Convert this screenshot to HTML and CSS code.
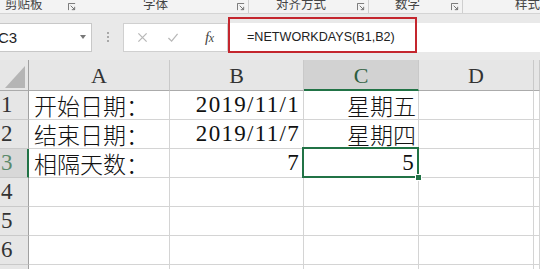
FILE: index.html
```html
<!DOCTYPE html>
<html lang="zh">
<head>
<meta charset="utf-8">
<title>NETWORKDAYS</title>
<link rel="stylesheet" href="styles.css">
</head>
<body>
<div class="ribbon">
  <div class="grp g1"><span class="lbl">剪贴板</span><svg class="launch" viewBox="0 0 9 9"><path d="M0.5 8V0.5H8" /><path d="M3 3L7.5 7.5M4.3 7.5H7.5V4.3" /></svg></div>
  <div class="grp g2"><span class="lbl">字体</span><svg class="launch" viewBox="0 0 9 9"><path d="M0.5 8V0.5H8" /><path d="M3 3L7.5 7.5M4.3 7.5H7.5V4.3" /></svg></div>
  <div class="grp g3"><span class="lbl">对齐方式</span><svg class="launch" viewBox="0 0 9 9"><path d="M0.5 8V0.5H8" /><path d="M3 3L7.5 7.5M4.3 7.5H7.5V4.3" /></svg></div>
  <div class="grp g4"><span class="lbl">数字</span><svg class="launch" viewBox="0 0 9 9"><path d="M0.5 8V0.5H8" /><path d="M3 3L7.5 7.5M4.3 7.5H7.5V4.3" /></svg></div>
  <div class="grp g5"><span class="lbl">样式</span></div>
</div>

<div class="fbar">
  <div class="namebox"><span class="nbtext">C3</span><span class="drop"></span></div>
  <div class="dots"><i></i><i></i><i></i></div>
  <div class="fxbox">
    <svg class="ico cancel" viewBox="0 0 12 12"><path d="M1.5 1.5L10.5 10.5M10.5 1.5L1.5 10.5" /></svg>
    <svg class="ico enter" viewBox="0 0 12 12"><path d="M1 6.5L4.5 10L11 2" /></svg>
    <span class="fx"><i>f</i><i class="x">x</i></span>
  </div>
  <div class="input"><span class="formula">=NETWORKDAYS(B1,B2)</span></div>
  <div class="mark"></div>
</div>

<div class="sheet">
  <div class="corner"><span class="tri"></span></div>
  <div class="ch">A</div>
  <div class="ch">B</div>
  <div class="ch sel">C</div>
  <div class="ch">D</div>
  <div class="ch"></div>

  <div class="rh">1</div>
  <div class="c">开始日期：</div>
  <div class="c num">2019/11/1</div>
  <div class="c r">星期五</div>
  <div class="c"></div>
  <div class="c"></div>

  <div class="rh">2</div>
  <div class="c">结束日期：</div>
  <div class="c num">2019/11/7</div>
  <div class="c r">星期四</div>
  <div class="c"></div>
  <div class="c"></div>

  <div class="rh rsel">3</div>
  <div class="c">相隔天数：</div>
  <div class="c num">7</div>
  <div class="c num active">5</div>
  <div class="c"></div>
  <div class="c"></div>

  <div class="rh">4</div>
  <div class="c"></div><div class="c"></div><div class="c"></div><div class="c"></div><div class="c"></div>
  <div class="rh">5</div>
  <div class="c"></div><div class="c"></div><div class="c"></div><div class="c"></div><div class="c"></div>
  <div class="rh">6</div>
  <div class="c"></div><div class="c"></div><div class="c"></div><div class="c"></div><div class="c"></div>
  <div class="rh last"></div>
  <div class="c last"></div><div class="c last"></div><div class="c last"></div><div class="c last"></div><div class="c last"></div>
</div>
</body>
</html>
```

FILE: styles.css
```css
* { box-sizing: border-box; }
html, body { margin: 0; padding: 0; }
body {
  width: 540px;
  height: 269px;
  overflow: hidden;
  background: #fff;
  font-family: "Noto Sans CJK SC", sans-serif;
}

/* ribbon strip */
.ribbon {
  display: flex;
  height: 14px;
  background: #f3f3f3;
  border-bottom: 1px solid #d4d4d4;
  overflow: hidden;
}
.grp {
  display: flex;
  align-items: flex-start;
  height: 13px;
}
.lbl {
  font-size: 12.5px;
  line-height: 13px;
  color: #444;
  margin-top: -3px;
  white-space: nowrap;
}
.launch {
  margin-left: auto;
  margin-top: 3px;
  width: 8px;
  height: 8px;
  fill: none;
  stroke: #666;
  stroke-width: 1;
}
.g1 { width: 80px; padding-left: 5px; padding-right: 4px; }
.g2 { width: 169px; padding-left: 63px; padding-right: 3px; border-right: 1px solid #cfcfcf; }
.g3 { width: 120px; padding-left: 27px; padding-right: 3px; border-right: 1px solid #cfcfcf; }
.g4 { width: 94px; padding-left: 26px; padding-right: 3px; border-right: 1px solid #cfcfcf; }
.g5 { flex: 1; padding-left: 52px; }

/* formula bar */
.fbar {
  position: relative;
  display: flex;
  align-items: center;
  height: 46px;
  background: #e9e9e9;
}
.namebox {
  display: flex;
  align-items: center;
  margin-left: -8px;
  width: 100px;
  height: 29px;
  background: #fff;
  border: 1px solid #c8c8c8;
  padding-left: 5px;
}
.nbtext {
  font-family: "Liberation Sans", sans-serif;
  font-size: 15px;
  color: #222;
}
.drop {
  margin-left: auto;
  margin-right: 5px;
  width: 0;
  height: 0;
  border-left: 3.5px solid transparent;
  border-right: 3.5px solid transparent;
  border-top: 4px solid #777;
}
.dots {
  display: flex;
  flex-direction: column;
  gap: 2px;
  margin-left: 15px;
  width: 3px;
}
.dots i {
  display: block;
  width: 2px;
  height: 2px;
  background: #a8a8a8;
}
.fxbox {
  display: flex;
  align-items: center;
  margin-left: 13px;
  width: 105px;
  height: 29px;
  background: #fff;
  border: 1px solid #d0d0d0;
}
.ico {
  width: 11px;
  height: 11px;
  fill: none;
  stroke: #b8b8b8;
  stroke-width: 1.4;
}
.cancel { margin-left: 13px; }
.enter { margin-left: 19px; width: 12px; }
.fx {
  margin-left: 26px;
  font-family: "Liberation Serif", serif;
  font-size: 15px;
  color: #444;
  letter-spacing: -0.5px;
}
.fx .x { font-size: 12px; }
.input {
  flex: 1;
  display: flex;
  align-items: center;
  margin-left: 2px;
  height: 29px;
  background: #fff;
  padding-left: 17px;
}
.formula {
  font-family: "Liberation Sans", sans-serif;
  font-size: 12.6px;
  color: #222;
}
.mark {
  position: absolute;
  left: 228px;
  top: 3px;
  width: 189px;
  height: 36px;
  border: 2px solid #c4262e;
}

/* sheet grid */
.sheet {
  display: grid;
  grid-template-columns: 29px 141px 134px 115px 115px 1fr;
  grid-template-rows: 31px repeat(6, 29px) 4px;
  overflow: hidden;
}
.corner {
  display: flex;
  justify-content: flex-end;
  align-items: flex-end;
  background: #e6e6e6;
  border-right: 1px solid #a0a0a0;
  border-bottom: 1px solid #ababab;
  padding: 0 3px 2px 0;
}
.tri {
  width: 20px;
  height: 22px;
  background: #b5b5b5;
  clip-path: polygon(100% 0, 100% 100%, 0 100%);
}
.ch {
  display: flex;
  align-items: center;
  justify-content: center;
  background: #e6e6e6;
  border-right: 1px solid #c9c9c9;
  border-bottom: 1px solid #ababab;
  font-family: "Liberation Serif", serif;
  font-size: 22px;
  color: #333;
  padding-top: 2px;
}
.ch.sel {
  background: #d2d2d2;
  border-bottom: 2px solid #217346;
  color: #2d5e3e;
}
.rh {
  display: flex;
  align-items: center;
  background: #e6e6e6;
  border-right: 1px solid #a0a0a0;
  border-bottom: 1px solid #c9c9c9;
  font-family: "Liberation Serif", serif;
  font-size: 23px;
  color: #333;
  padding-left: 1px;
}
.rh.rsel {
  background: #d8d8d8;
  border-right: 2px solid #217346;
  color: #5b8a6b;
}
.rh.last, .c.last { border-bottom: 0; }
.c {
  position: relative;
  display: flex;
  align-items: center;
  border-right: 1px solid #d4d4d4;
  border-bottom: 1px solid #d4d4d4;
  font-family: "Liberation Serif", "Noto Sans CJK SC", serif;
  font-size: 23px;
  font-weight: 300;
  color: #111;
  padding-left: 5px;
  white-space: nowrap;
}
.c.r {
  justify-content: flex-end;
  padding-right: 2px;
}
.c.num {
  justify-content: flex-end;
  padding-right: 3px;
  letter-spacing: 1.3px;
  font-weight: 400;
}
.c.active::after {
  content: "";
  position: absolute;
  left: -2px;
  top: -2px;
  right: -1px;
  bottom: -1px;
  border: 2px solid #217346;
}
.c.active::before {
  content: "";
  position: absolute;
  right: -3px;
  bottom: -3px;
  width: 5px;
  height: 5px;
  background: #217346;
  outline: 1px solid #fff;
  z-index: 2;
}
```
